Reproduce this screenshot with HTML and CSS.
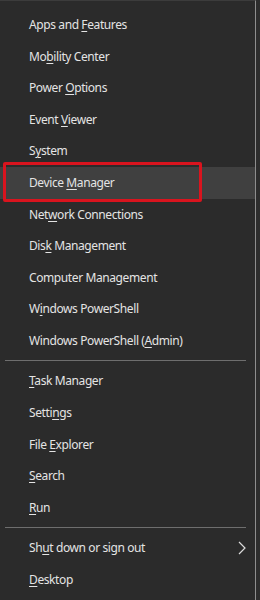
FILE: index.html
```html
<!DOCTYPE html>
<html lang="en">
<head>
    <meta charset="UTF-8">
    <meta name="viewport" content="width=device-width, initial-scale=1.0">
    <title>Power User Menu</title>
    <link rel="stylesheet" href="styles.css">
</head>
<body>
    <div class="menu">
        <ul class="group">
            <li class="item">Apps and <u>F</u>eatures</li>
            <li class="item">Mo<u>b</u>ility Center</li>
            <li class="item">Power <u>O</u>ptions</li>
            <li class="item">Event <u>V</u>iewer</li>
            <li class="item">S<u>y</u>stem</li>
            <li class="item active">Device <u>M</u>anager<span class="mark"></span></li>
            <li class="item">Net<u>w</u>ork Connections</li>
            <li class="item">Dis<u>k</u> Management</li>
            <li class="item">Computer Management</li>
            <li class="item">W<u>i</u>ndows PowerShell</li>
            <li class="item">Windows PowerShell (<u>A</u>dmin)</li>
        </ul>
        <div class="sep"></div>
        <ul class="group">
            <li class="item"><u>T</u>ask Manager</li>
            <li class="item">Setti<u>n</u>gs</li>
            <li class="item">File <u>E</u>xplorer</li>
            <li class="item"><u>S</u>earch</li>
            <li class="item"><u>R</u>un</li>
        </ul>
        <div class="sep"></div>
        <ul class="group">
            <li class="item">Sh<u>u</u>t down or sign out
                <svg class="chevron" width="8" height="14" viewBox="0 0 8 14">
                    <polyline points="1,1 7,7 1,13" fill="none" stroke="#dcdcdc" stroke-width="1.2"/>
                </svg>
            </li>
            <li class="item"><u>D</u>esktop</li>
        </ul>
    </div>
</body>
</html>
```
FILE: styles.css
```css
body {
    margin: 0;
    background-color: #2d2d2d;
    font-family: "Noto Sans", "Open Sans", sans-serif;
}
.menu {
    width: 256px;
    height: 600px;
    box-sizing: border-box;
    background-color: #2b2b2b;
    border-right: 1px solid #8e8e8e;
    border-top: 1px solid #3c3c3c;
    padding-top: 8px;
}
.group {
    list-style: none;
    margin: 0;
    padding: 0;
}
.item {
    position: relative;
    height: 31.6px;
    line-height: 31.6px;
    padding-left: 29px;
    color: #e4e4e4;
    font-size: 12px;
    letter-spacing: -0.4px;
    white-space: nowrap;
}
.item u {
    text-underline-offset: 2px;
}
.active {
    background-color: #404040;
}
.mark {
    position: absolute;
    left: 3px;
    top: -5px;
    width: 199px;
    height: 40px;
    box-sizing: border-box;
    border: 3px solid #d9141e;
    border-radius: 2px;
}
.sep {
    height: 8.8px;
    display: flex;
    align-items: center;
    padding: 0 9px 0 5px;
}
.sep::before {
    content: "";
    flex: 1;
    height: 1px;
    background-color: #6e6e6e;
}
.chevron {
    position: absolute;
    left: 238px;
    top: 9px;
}
```
